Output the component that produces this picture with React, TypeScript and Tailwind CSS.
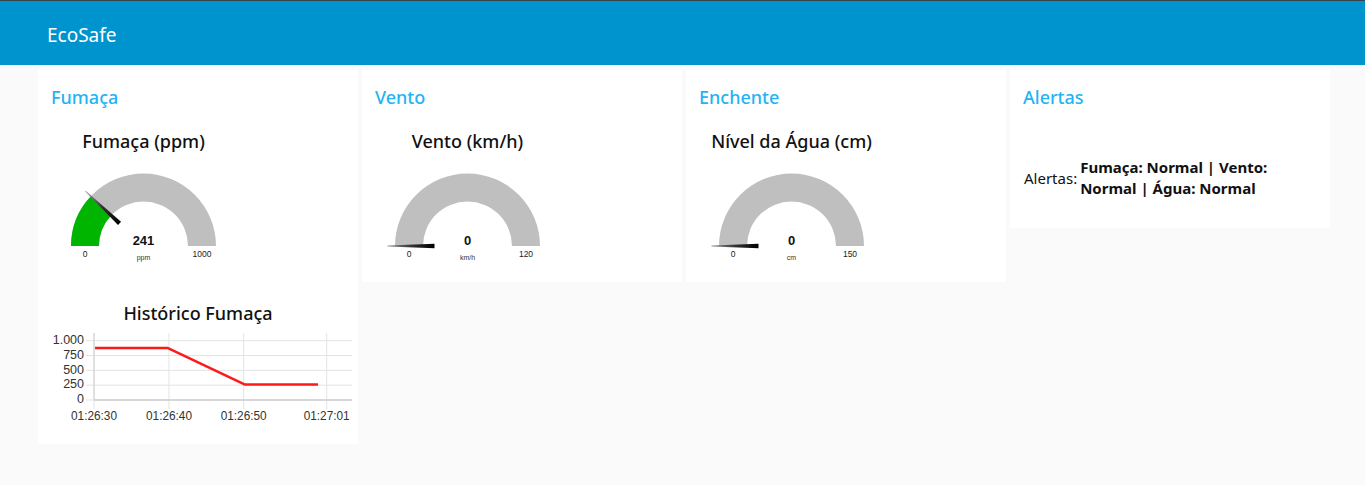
import React from "react";

type GaugeProps = { title: string; value: number; max: number; unit: string };

const Gauge = ({ title, value, max, unit }: GaugeProps) => {
  const cx = 105.5;
  const cy = 88;
  const ro = 72.5;
  const ri = 44.5;
  const f = Math.min(value / max, 1);
  const a = Math.PI * f;
  const px = (r: number) => cx - r * Math.cos(a);
  const py = (r: number) => cy - r * Math.sin(a);
  const nx = -Math.sin(a);
  const ny = Math.cos(a);
  const band = `M ${cx - ro} ${cy} A ${ro} ${ro} 0 0 1 ${cx + ro} ${cy} L ${cx + ri} ${cy} A ${ri} ${ri} 0 0 0 ${cx - ri} ${cy} Z`;
  const fill = `M ${cx - ro} ${cy} A ${ro} ${ro} 0 0 1 ${px(ro)} ${py(ro)} L ${px(ri)} ${py(ri)} A ${ri} ${ri} 0 0 0 ${cx - ri} ${cy} Z`;
  const needle = [
    [px(33) + nx * 2.2, py(33) + ny * 2.2],
    [px(80) + nx * 0.4, py(80) + ny * 0.4],
    [px(80) - nx * 0.4, py(80) - ny * 0.4],
    [px(33) - nx * 2.2, py(33) - ny * 2.2],
  ]
    .map((p) => p.join(","))
    .join(" ");

  return (
    <div className="w-[211px]">
      <div className="h-[34px] flex items-center justify-center text-[18px] font-medium text-[#111]">{title}</div>
      <svg width="211" height="112" className="block" fontFamily="'Liberation Sans', Arial, sans-serif">
        <defs>
          <linearGradient id={`ng-${unit}`} x1={px(80)} y1={py(80)} x2={px(33)} y2={py(33)} gradientUnits="userSpaceOnUse">
            <stop offset="0" stopColor="#9a9a9a" />
            <stop offset="0.5" stopColor="#333" />
            <stop offset="1" stopColor="#000" />
          </linearGradient>
        </defs>
        <path d={band} fill="#bfbfbf" />
        {f > 0 && <path d={fill} fill="#00b500" />}
        <polygon points={needle} fill={`url(#ng-${unit})`} />
        <text x={cx} y={84} textAnchor="middle" dominantBaseline="middle" fontSize="13" fontWeight="bold" fill="#111">
          {value}
        </text>
        <text x={cx} y={100} textAnchor="middle" dominantBaseline="middle" fontSize="7" fill="#333">
          {unit}
        </text>
        <text x={cx - 58.5} y={97} textAnchor="middle" dominantBaseline="middle" fontSize="8.5" fill="#222">
          0
        </text>
        <text x={cx + 58.5} y={97} textAnchor="middle" dominantBaseline="middle" fontSize="8.5" fill="#222">
          {max}
        </text>
      </svg>
    </div>
  );
};

const HistoryChart = () => {
  const y = (v: number) => 70 - (v / 1000) * 59.3;
  const gridX = [56, 131, 205.7, 288.7];
  const xLabels = ["01:26:30", "01:26:40", "01:26:50", "01:27:01"];
  const yTicks = [
    [1000, "1.000"],
    [750, "750"],
    [500, "500"],
    [250, "250"],
    [0, "0"],
  ] as const;
  const pts = [
    [57, y(875)],
    [130, y(875)],
    [207, y(260)],
    [280, y(260)],
  ]
    .map((p) => p.join(","))
    .join(" ");

  return (
    <div>
      <div className="h-[34px] flex items-center justify-center text-[18px] font-medium text-[#111]">Histórico Fumaça</div>
      <svg width="320" height="102" className="block" fontFamily="'Liberation Sans', Arial, sans-serif">
        {yTicks.map(([v]) => (
          <line key={v} x1={48} x2={314} y1={y(v)} y2={y(v)} stroke="#e3e3e3" strokeWidth="1" />
        ))}
        {gridX.map((gx) => (
          <line key={gx} x1={gx} x2={gx} y1={3} y2={79} stroke="#e3e3e3" strokeWidth="1" />
        ))}
        <line x1={56} x2={314} y1={70} y2={70} stroke="#bdbdbd" strokeWidth="1" />
        <line x1={56} x2={56} y1={3} y2={70} stroke="#d0d0d0" strokeWidth="1" />
        {yTicks.map(([v, l]) => (
          <text key={l} x={46} y={y(v)} textAnchor="end" dominantBaseline="middle" fontSize="12.5" fill="#333">
            {l}
          </text>
        ))}
        {gridX.map((gx, i) => (
          <text key={gx} x={gx} y={87} textAnchor="middle" dominantBaseline="middle" fontSize="12.5" fill="#333" textLength="46" lengthAdjust="spacingAndGlyphs">
            {xLabels[i]}
          </text>
        ))}
        <polyline points={pts} fill="none" stroke="#ff1a1a" strokeWidth="2.5" strokeLinejoin="round" />
      </svg>
    </div>
  );
};

const Card = ({ title, children, className = "" }: { title: string; children?: React.ReactNode; className?: string }) => (
  <div className={`w-[320px] bg-white ${className}`}>
    <div className="h-[54px] flex items-center pl-[13px] text-[18px] font-medium text-[#1fb4f5]">{title}</div>
    {children}
  </div>
);

const App = () => {
  return (
    <div className="min-h-[485px] bg-[#fafafa] font-['Noto_Sans',sans-serif]">
      <div className="h-[65px] border-t border-[#34424c] bg-[#0094ce] flex items-center pl-[47px] pt-[4px] text-[19px] text-white">
        EcoSafe
      </div>
      <div className="flex items-start gap-[4px] pl-[38px] pt-[5px]">
        <Card title="Fumaça" className="pb-[12px]">
          <Gauge title="Fumaça (ppm)" value={241} max={1000} unit="ppm" />
          <div className="mt-[26px]">
            <HistoryChart />
          </div>
        </Card>
        <Card title="Vento" className="pb-[12px]">
          <Gauge title="Vento (km/h)" value={0} max={120} unit="km/h" />
        </Card>
        <Card title="Enchente" className="pb-[12px]">
          <Gauge title="Nível da Água (cm)" value={0} max={150} unit="cm" />
        </Card>
        <Card title="Alertas">
          <div className="h-[104px] flex items-center gap-[3px] px-[14px] pt-[4px] text-[15px] text-[#111]">
            <span className="shrink-0">Alertas:</span>
            <span className="font-bold leading-[21px]">Fumaça: Normal | Vento: Normal | Água: Normal</span>
          </div>
        </Card>
      </div>
    </div>
  );
};

export default App;
